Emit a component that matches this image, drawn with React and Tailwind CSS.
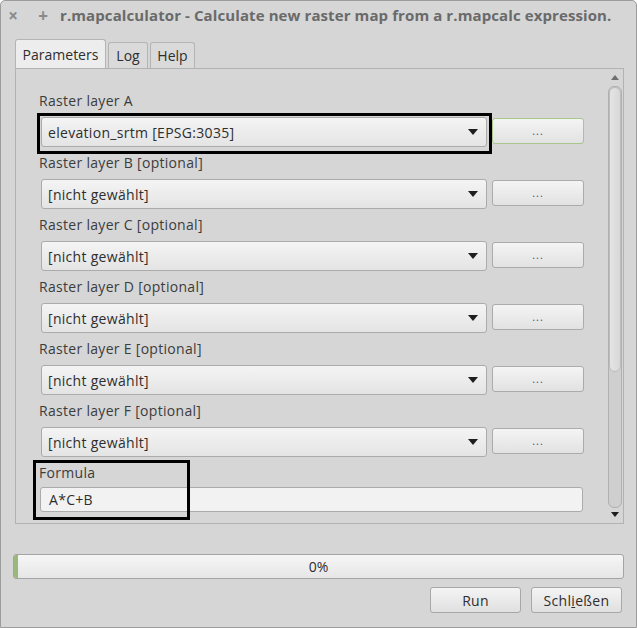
import React from 'react';

const layers = [
  { label: 'Raster layer A', value: 'elevation_srtm [EPSG:3035]', mark: true, focus: true },
  { label: 'Raster layer B [optional]', value: '[nicht gewählt]' },
  { label: 'Raster layer C [optional]', value: '[nicht gewählt]' },
  { label: 'Raster layer D [optional]', value: '[nicht gewählt]' },
  { label: 'Raster layer E [optional]', value: '[nicht gewählt]' },
  { label: 'Raster layer F [optional]', value: '[nicht gewählt]' },
];

function Caret() {
  return (
    <svg width="10" height="6" viewBox="0 0 10 6" className="shrink-0">
      <path d="M0 0 H10 L5 6 Z" fill="#1e1e1e" />
    </svg>
  );
}

function LayerRow({ layer }) {
  return (
    <div className="relative">
      <div className="h-[16px] flex items-center text-[14px] tracking-[0.3px] text-[#3c3c3c] ml-[23px]">{layer.label}</div>
      <div className="flex items-start mt-[9px] ml-[25px]">
        <div className="w-[446px] h-[30px] rounded-[3px] border border-[#ababab] bg-gradient-to-b from-[#f4f4f4] to-[#e4e4e4] flex items-center pl-[6px] pr-[8px] text-[14px] tracking-[0.3px] text-[#2e2e2e]">
          <span className="flex-1">{layer.value}</span>
          <Caret />
        </div>
        <div
          className={`ml-[5px] mt-[1px] w-[92px] h-[26px] rounded-[3px] border bg-gradient-to-b from-[#f4f4f4] to-[#e2e2e2] flex items-center justify-center text-[11px] text-[#555] tracking-[1px] ${
            layer.focus ? 'border-[#a9c48c]' : 'border-[#ababab]'
          }`}
        >
          ...
        </div>
      </div>
      {layer.mark && (
        <div className="absolute left-[21px] top-[21px] w-[455px] h-[41px] border-[3px] border-black pointer-events-none" />
      )}
    </div>
  );
}

export default function App() {
  return (
    <div
      className="w-[637px] h-[628px] bg-[#d6d6d6] border border-[#9c9c9c] rounded-t-[5px] overflow-hidden flex flex-col"
      style={{ fontFamily: '"Open Sans", "DejaVu Sans", sans-serif' }}
    >
      {/* title bar */}
      <div className="h-[29px] flex items-center text-[#6a6a6a] shrink-0">
        <span className="ml-[5px] w-[14px] text-center text-[17px] font-bold text-[#8a8a8a]">×</span>
        <span className="ml-[16px] w-[14px] text-center text-[17px] font-bold text-[#8a8a8a]">+</span>
        <span className="ml-[10px] text-[15px] font-bold whitespace-nowrap tracking-[0.1px]">
          r.mapcalculator - Calculate new raster map from a r.mapcalc expression.
        </span>
      </div>

      {/* tabs */}
      <div className="flex items-end ml-[14px] mt-[9px] h-[29px] shrink-0 text-[14px] text-[#2e2e2e]">
        <div className="h-[29px] w-[91px] bg-[#ededed] border border-b-0 border-[#b4b4b4] rounded-t-[3px] flex items-center justify-center">
          Parameters
        </div>
        <div className="ml-[2px] h-[26px] w-[40px] bg-[#dadada] border border-b-0 border-[#b4b4b4] rounded-t-[3px] flex items-center justify-center">
          Log
        </div>
        <div className="ml-[2px] h-[26px] w-[45px] bg-[#dadada] border border-b-0 border-[#b4b4b4] rounded-t-[3px] flex items-center justify-center">
          Help
        </div>
      </div>

      {/* pane */}
      <div className="ml-[14px] w-[609px] h-[456px] border border-[#b2b2b2] flex shrink-0">
        <div className="flex-1 relative">
          <div className="flex flex-col gap-[7px] pt-[23px]">
            {layers.map((l) => (
              <LayerRow key={l.label} layer={l} />
            ))}
            <div className="relative">
              <div className="h-[16px] flex items-center text-[14px] tracking-[0.3px] text-[#3c3c3c] ml-[23px]">Formula</div>
              <div className="ml-[24px] mt-[7px] w-[543px] h-[25px] rounded-[3px] border border-[#ababab] bg-[#f2f2f2] flex items-center pl-[8px] text-[14px] tracking-[0.3px] text-[#2e2e2e]">
                A*C+B
              </div>
              <div className="absolute left-[17px] top-[-4px] w-[157px] h-[60px] border-[3px] border-black pointer-events-none" />
            </div>
          </div>
        </div>
        {/* scrollbar */}
        <div className="w-[17px] flex flex-col items-center">
          <svg width="8" height="5" viewBox="0 0 8 5" className="mt-[6px]">
            <path d="M0 5 H8 L4 0 Z" fill="#6e6e6e" />
          </svg>
          <div className="mt-[6px] w-[14px] flex-1 rounded-[6px] border border-[#b0b0b0] bg-[#cfcfcf] flex flex-col">
            <div className="h-[285px] rounded-[6px] border border-[#bcbcbc] bg-gradient-to-r from-[#e4e4e4] to-[#d8d8d8]" />
          </div>
          <svg width="8" height="5" viewBox="0 0 8 5" className="mt-[4px] mb-[6px]">
            <path d="M0 0 H8 L4 5 Z" fill="#1e1e1e" />
          </svg>
        </div>
      </div>

      {/* progress */}
      <div className="ml-[12px] mt-[30px] w-[611px] h-[25px] rounded-[3px] border border-[#a4a4a4] bg-gradient-to-b from-[#f6f6f6] to-[#e6e6e6] relative flex items-center justify-center text-[14px] text-[#2e2e2e] shrink-0">
        <div className="absolute left-0 top-0 bottom-0 w-[4px] bg-[#9ab878] rounded-l-[2px]" />
        0%
      </div>

      {/* buttons */}
      <div className="flex justify-end gap-[10px] mr-[14px] mt-[8px] text-[14px] tracking-[0.3px] text-[#2e2e2e]">
        <div className="w-[91px] h-[26px] rounded-[3px] border border-[#a8a8a8] bg-gradient-to-b from-[#f4f4f4] to-[#e0e0e0] flex items-center justify-center">
          Run
        </div>
        <div className="w-[91px] h-[26px] rounded-[3px] border border-[#a8a8a8] bg-gradient-to-b from-[#f4f4f4] to-[#e0e0e0] flex items-center justify-center">
          <span>
            Schl<span className="underline">i</span>eßen
          </span>
        </div>
      </div>
    </div>
  );
}
